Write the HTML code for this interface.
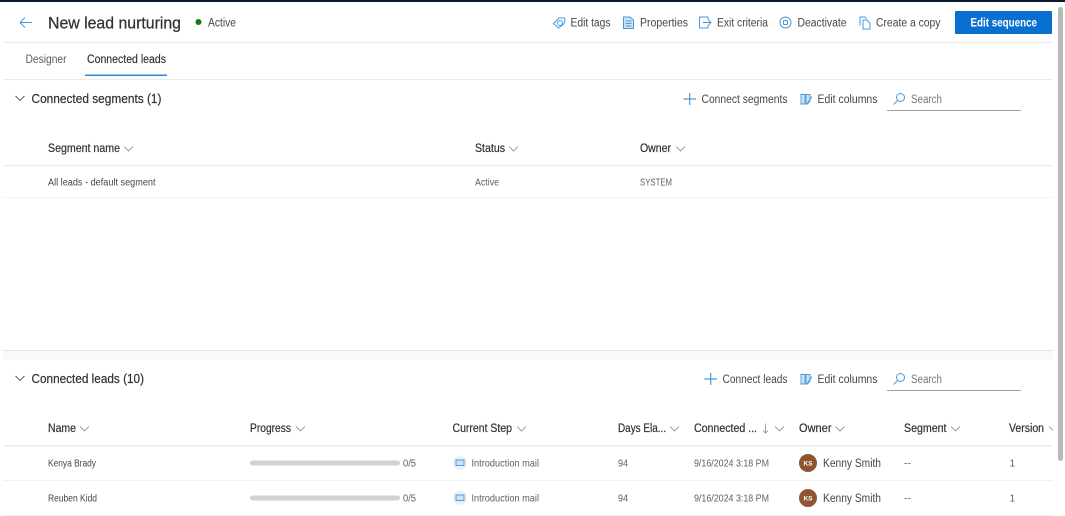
<!DOCTYPE html>
<html><head><meta charset="utf-8"><style>
html,body{margin:0;padding:0;background:#fff;width:1065px;height:516px;overflow:hidden}
svg{display:block}
text{font-family:"Liberation Sans",sans-serif;fill:#323130;font-size:10px}
.h{font-size:11.5px;fill:#323130;stroke:#323130;stroke-width:.2px}
.c{font-size:10px;fill:#605e5c}
.a{font-size:11.5px;fill:#484644}
.i{fill:none;stroke:#4a98d8;stroke-width:1}
.v{fill:none;stroke:#8a8886;stroke-width:.8}
</style></head><body>
<svg width="1065" height="516" viewBox="0 0 1065 516" xmlns="http://www.w3.org/2000/svg">
<defs>
<path id="ch" d="M0 0L4.5 4.5L9 0" class="v"/>
</defs>
<rect width="1065" height="516" fill="#fff"/>
<rect width="1065" height="2" fill="#0b1a33"/>

<!-- header -->
<path d="M20 22.5H32M20 22.5L25 17.5M20 22.5L25 27.5" class="i"/>
<text x="48" y="28.500" style="font-size:16.500px;stroke:#323130;stroke-width:.25px" textLength="133" lengthAdjust="spacingAndGlyphs">New lead nurturing</text>
<circle cx="198.500" cy="22" r="3" fill="#107c10"/>
<text x="208" y="26.500" class="a" textLength="28" lengthAdjust="spacingAndGlyphs">Active</text>

<path d="M553.500 23.500L559 18H564.500C565.500 21 564.500 24 562 25.500L558.500 28Z" class="i"/><circle cx="560" cy="23" r="2.500" class="i"/>
<text x="570.500" y="26.500" class="a" textLength="40" lengthAdjust="spacingAndGlyphs">Edit tags</text>
<path d="M623.500 17H630L633.500 20V28.500H623.500Z" fill="#cfe4f6" stroke="#4a98d8"/><path d="M625.500 21H631.500M625.500 23.500H631.500M625.500 26H631.500" class="i"/>
<text x="640" y="26.500" class="a" textLength="48" lengthAdjust="spacingAndGlyphs">Properties</text>
<path d="M708 20V17H699.500V28H708V25" class="i"/><path d="M703 22.500H711M708.500 20L711 22.500L708.500 25" class="i"/>
<text x="717" y="26.500" class="a" textLength="51" lengthAdjust="spacingAndGlyphs">Exit criteria</text>
<circle cx="785.500" cy="22.500" r="5.500" class="i"/><rect x="783.500" y="20.500" width="4" height="4" rx="1" class="i"/>
<text x="797.500" y="26.500" class="a" textLength="49" lengthAdjust="spacingAndGlyphs">Deactivate</text>
<path d="M860 25.500V17H865L866.500 19" class="i"/><path d="M863 20H867L870 23V29H863Z" class="i"/>
<text x="876" y="26.500" class="a" textLength="64.500" lengthAdjust="spacingAndGlyphs">Create a copy</text>
<rect x="955" y="11" width="97" height="23" rx="1" fill="#0a70d0"/>
<text x="970.500" y="26.500" style="fill:#fff;font-size:11.500px;font-weight:bold" textLength="66.500" lengthAdjust="spacingAndGlyphs">Edit sequence</text>
<rect x="3" y="42" width="1050" height="1" fill="#edebe9"/>

<!-- tabs -->
<text x="25.500" y="63" class="a" style="fill:#605e5c" textLength="41" lengthAdjust="spacingAndGlyphs">Designer</text>
<text x="87" y="63" class="a" style="fill:#323130;stroke:#323130;stroke-width:.15px" textLength="79" lengthAdjust="spacingAndGlyphs">Connected leads</text>
<rect x="85" y="74.500" width="82" height="1.500" fill="#2b88d8"/>
<rect x="3" y="79" width="1050" height="1" fill="#edebe9"/>

<!-- segments -->
<path d="M15.500 96L20 100.500L24.500 96" fill="none" stroke="#555" stroke-width=".9"/>
<text x="31.500" y="103" style="font-size:12.500px;stroke:#323130;stroke-width:.2px" textLength="130" lengthAdjust="spacingAndGlyphs">Connected segments (1)</text>
<path d="M683.500 99H696M689.700 93V105" fill="none" stroke="#4a98d8" stroke-width="1.200"/>
<text x="701.500" y="103" class="a" textLength="86" lengthAdjust="spacingAndGlyphs">Connect segments</text>
<path d="M801 94.500H805V104H801ZM806 94.500H810V101L807.500 104H806Z" fill="#cfe4f6" stroke="#4a98d8" stroke-width=".9"/><path d="M807 104L812 96.500" class="i"/>
<text x="817.500" y="103" class="a" textLength="60" lengthAdjust="spacingAndGlyphs">Edit columns</text>
<circle cx="900.500" cy="97.500" r="4" class="i"/><path d="M897.500 100.500L893.500 104.500" class="i"/>
<text x="911" y="103" class="a" style="fill:#797775" textLength="31" lengthAdjust="spacingAndGlyphs">Search</text>
<rect x="887" y="110" width="134" height="1" fill="#a19f9d"/>

<text x="48" y="152" class="h" textLength="72" lengthAdjust="spacingAndGlyphs">Segment name</text><use href="#ch" x="124" y="146.500"/>
<text x="475" y="152" class="h" textLength="30" lengthAdjust="spacingAndGlyphs">Status</text><use href="#ch" x="509" y="146.500"/>
<text x="640" y="152" class="h" textLength="31" lengthAdjust="spacingAndGlyphs">Owner</text><use href="#ch" x="676" y="146.500"/>
<rect x="3" y="165" width="1050" height="1" fill="#edebe9"/>
<text x="48" y="185.500" class="c" style="fill:#484644" textLength="107.500" lengthAdjust="spacingAndGlyphs">All leads - default segment</text>
<text x="475" y="185.500" class="c" textLength="24" lengthAdjust="spacingAndGlyphs">Active</text>
<text x="640" y="185.500" class="c" textLength="32" lengthAdjust="spacingAndGlyphs">SYSTEM</text>
<rect x="3" y="197" width="1050" height="1" fill="#f3f2f1"/>

<!-- divider -->
<rect x="3" y="350" width="1050" height="10" fill="#faf9f8"/>
<rect x="3" y="350" width="1050" height="1" fill="#e6e4e2"/>

<!-- leads -->
<path d="M15.500 376L20 380.500L24.500 376" fill="none" stroke="#555" stroke-width=".9"/>
<text x="31.500" y="383" style="font-size:12.500px;stroke:#323130;stroke-width:.2px" textLength="112.500" lengthAdjust="spacingAndGlyphs">Connected leads (10)</text>
<path d="M704.500 379H717M710.700 373V385" fill="none" stroke="#4a98d8" stroke-width="1.200"/>
<text x="722.500" y="383" class="a" textLength="65" lengthAdjust="spacingAndGlyphs">Connect leads</text>
<path d="M801 374.500H805V384H801ZM806 374.500H810V381L807.500 384H806Z" fill="#cfe4f6" stroke="#4a98d8" stroke-width=".9"/><path d="M807 384L812 376.500" class="i"/>
<text x="817.500" y="383" class="a" textLength="60" lengthAdjust="spacingAndGlyphs">Edit columns</text>
<circle cx="900.500" cy="377.500" r="4" class="i"/><path d="M897.500 380.500L893.500 384.500" class="i"/>
<text x="911" y="383" class="a" style="fill:#797775" textLength="31" lengthAdjust="spacingAndGlyphs">Search</text>
<rect x="887" y="390" width="134" height="1" fill="#a19f9d"/>

<text x="48" y="432" class="h" textLength="28" lengthAdjust="spacingAndGlyphs">Name</text><use href="#ch" x="80" y="426.500"/>
<text x="250" y="432" class="h" textLength="41" lengthAdjust="spacingAndGlyphs">Progress</text><use href="#ch" x="296" y="426.500"/>
<text x="452.500" y="432" class="h" textLength="59.500" lengthAdjust="spacingAndGlyphs">Current Step</text><use href="#ch" x="517" y="426.500"/>
<text x="618" y="432" class="h" textLength="48" lengthAdjust="spacingAndGlyphs">Days Ela...</text><use href="#ch" x="670" y="426.500"/>
<text x="694" y="432" class="h" textLength="63" lengthAdjust="spacingAndGlyphs">Connected ...</text>
<path d="M765.500 423.500V433M763 430.500L765.500 433L768 430.500" fill="none" stroke="#8a8886" stroke-width=".8"/>
<use href="#ch" x="775" y="426.500"/>
<text x="799" y="432" class="h" textLength="32.500" lengthAdjust="spacingAndGlyphs">Owner</text><use href="#ch" x="835.500" y="426.500"/>
<text x="904" y="432" class="h" textLength="42.500" lengthAdjust="spacingAndGlyphs">Segment</text><use href="#ch" x="951" y="426.500"/>
<text x="1009" y="432" class="h" textLength="35" lengthAdjust="spacingAndGlyphs">Version</text><path d="M1049 426.500L1053 430.500" class="v"/>
<rect x="3" y="445" width="1050" height="1.500" fill="#edebe9"/>

<!-- row 1 -->
<text x="48" y="466.500" class="c" style="fill:#484644" textLength="48" lengthAdjust="spacingAndGlyphs">Kenya Brady</text>
<rect x="250" y="460.500" width="150" height="5" rx="2.500" fill="#d2d2d2"/>
<text x="403" y="466.500" class="c" textLength="13" lengthAdjust="spacingAndGlyphs">0/5</text>
<circle cx="460" cy="463" r="7" fill="#e9f1fb"/><rect x="456" y="460" width="8" height="5.500" fill="#cfe4f6" stroke="#4a8fe0" stroke-width=".9"/>
<text x="471.500" y="466.500" class="c" textLength="67.500" lengthAdjust="spacingAndGlyphs">Introduction mail</text>
<text x="618" y="466.500" class="c" textLength="10" lengthAdjust="spacingAndGlyphs">94</text>
<text x="694" y="466.500" class="c" textLength="75" lengthAdjust="spacingAndGlyphs">9/16/2024 3:18 PM</text>
<circle cx="808" cy="463" r="9" fill="#8e562e"/>
<text x="808" y="465.500" text-anchor="middle" style="fill:#fff;font-size:6.500px;font-weight:bold">KS</text>
<text x="823" y="467" class="a" textLength="58" lengthAdjust="spacingAndGlyphs">Kenny Smith</text>
<text x="904" y="466.500" class="c" textLength="7" lengthAdjust="spacingAndGlyphs">--</text>
<text x="1009.500" y="466.500" class="c">1</text>
<rect x="3" y="480" width="1050" height="1" fill="#f3f2f1"/>

<!-- row 2 -->
<text x="48" y="501.500" class="c" style="fill:#484644" textLength="49" lengthAdjust="spacingAndGlyphs">Reuben Kidd</text>
<rect x="250" y="495.500" width="150" height="5" rx="2.500" fill="#d2d2d2"/>
<text x="403" y="501.500" class="c" textLength="13" lengthAdjust="spacingAndGlyphs">0/5</text>
<circle cx="460" cy="498" r="7" fill="#e9f1fb"/><rect x="456" y="495" width="8" height="5.500" fill="#cfe4f6" stroke="#4a8fe0" stroke-width=".9"/>
<text x="471.500" y="501.500" class="c" textLength="67.500" lengthAdjust="spacingAndGlyphs">Introduction mail</text>
<text x="618" y="501.500" class="c" textLength="10" lengthAdjust="spacingAndGlyphs">94</text>
<text x="694" y="501.500" class="c" textLength="75" lengthAdjust="spacingAndGlyphs">9/16/2024 3:18 PM</text>
<circle cx="808" cy="498" r="9" fill="#8e562e"/>
<text x="808" y="500.500" text-anchor="middle" style="fill:#fff;font-size:6.500px;font-weight:bold">KS</text>
<text x="823" y="502" class="a" textLength="58" lengthAdjust="spacingAndGlyphs">Kenny Smith</text>
<text x="904" y="501.500" class="c" textLength="7" lengthAdjust="spacingAndGlyphs">--</text>
<text x="1009.500" y="501.500" class="c">1</text>
<rect x="3" y="515" width="1050" height="1" fill="#f3f2f1"/>

<!-- scrollbar -->
<rect x="1058" y="7" width="5" height="454" rx="2.500" fill="#b8b8b8"/>
</svg>
</body></html>
